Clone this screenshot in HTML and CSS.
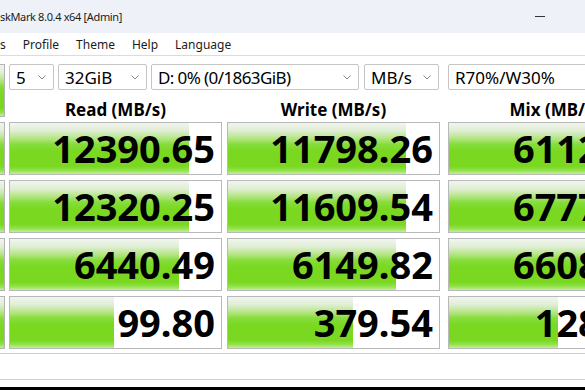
FILE: index.html
```html
<!DOCTYPE html>
<html lang="en-US">
<head>
    <meta charset="utf-8"/>
    <title>CrystalDiskMark 8.0.4 x64 [Admin]</title>
    <link rel="stylesheet" href="styles.css">
</head>
<body>
    <div class="window">
        <div class="titlebar">
            <span class="title">skMark 8.0.4 x64 [Admin]</span>
            <span class="minimize"></span>
        </div>
        <div class="menubar">
            <span class="menu-item">s</span>
            <span class="menu-item">Profile</span>
            <span class="menu-item">Theme</span>
            <span class="menu-item">Help</span>
            <span class="menu-item">Language</span>
        </div>

        <div class="content">
            <div class="top">
                <div class="all-button"></div>
                <div class="top-right">
                    <div class="combos">
                        <div class="combo combo-count">5
                            <svg class="chevron" width="8" height="5" viewBox="0 0 8 5"><polyline points="0.5,0.5 4,4 7.5,0.5"/></svg>
                        </div>
                        <div class="combo combo-size">32GiB
                            <svg class="chevron" width="8" height="5" viewBox="0 0 8 5"><polyline points="0.5,0.5 4,4 7.5,0.5"/></svg>
                        </div>
                        <div class="combo combo-drive">D: 0% (0/1863GiB)
                            <svg class="chevron" width="8" height="5" viewBox="0 0 8 5"><polyline points="0.5,0.5 4,4 7.5,0.5"/></svg>
                        </div>
                        <div class="combo combo-unit">MB/s
                            <svg class="chevron" width="8" height="5" viewBox="0 0 8 5"><polyline points="0.5,0.5 4,4 7.5,0.5"/></svg>
                        </div>
                        <div class="combo combo-mix">R70%/W30%
                            <svg class="chevron" width="8" height="5" viewBox="0 0 8 5"><polyline points="0.5,0.5 4,4 7.5,0.5"/></svg>
                        </div>
                    </div>
                    <div class="headers">
                        <div class="header col-read">Read (MB/s)</div>
                        <div class="header col-write">Write (MB/s)</div>
                        <div class="header col-mix">Mix (MB/s)</div>
                    </div>
                </div>
            </div>

            <div class="results">
                <div class="row">
                    <div class="test-button"></div>
                    <div class="cell col-read" style="background-size: 179px 100%;">12390.65</div>
                    <div class="cell col-write" style="background-size: 178px 100%;">11798.26</div>
                    <div class="cell col-mix" style="background-size: 168px 100%;">6112.48</div>
                </div>
                <div class="row">
                    <div class="test-button"></div>
                    <div class="cell col-read" style="background-size: 179px 100%;">12320.25</div>
                    <div class="cell col-write" style="background-size: 178px 100%;">11609.54</div>
                    <div class="cell col-mix" style="background-size: 170px 100%;">6777.31</div>
                </div>
                <div class="row">
                    <div class="test-button"></div>
                    <div class="cell col-read" style="background-size: 169px 100%;">6440.49</div>
                    <div class="cell col-write" style="background-size: 168px 100%;">6149.82</div>
                    <div class="cell col-mix" style="background-size: 169px 100%;">6608.17</div>
                </div>
                <div class="row">
                    <div class="test-button"></div>
                    <div class="cell col-read" style="background-size: 104px 100%;">99.80</div>
                    <div class="cell col-write" style="background-size: 125px 100%;">379.54</div>
                    <div class="cell col-mix" style="background-size: 109px 100%;">128.63</div>
                </div>
            </div>

            <div class="status"></div>
        </div>
    </div>
</body>
</html>
```

FILE: styles.css
```css
body {
    margin: 0;
    width: 585px;
    height: 390px;
    overflow: hidden;
    background: #000;
    font-family: "Noto Sans", "Liberation Sans", sans-serif;
    color: #000;
}

.window {
    height: 387px;
    background: #fff;
    overflow: hidden;
}

/* title bar and menu */

.titlebar {
    height: 33px;
    background-color: #eef2f8;
    display: flex;
    align-items: center;
    justify-content: space-between;
    font-size: 11px;
    letter-spacing: -0.35px;
    color: #1b1b1b;
    white-space: nowrap;
}

.minimize {
    width: 10px;
    height: 1px;
    background-color: #333;
    margin-right: 40px;
}

.menubar {
    height: 22px;
    border-bottom: 1px solid #dcdcdc;
    display: flex;
    align-items: center;
    gap: 17px;
    font-size: 12px;
    color: #1b1b1b;
    white-space: nowrap;
}

/* controls */

.content {
    width: 680px;
    padding-top: 8px;
    white-space: nowrap;
}

.top {
    display: flex;
    align-items: flex-start;
}

.all-button,
.test-button {
    flex-shrink: 0;
    width: 4px;
    border: 1px solid #b4b4b4;
    border-left: none;
    background-image: linear-gradient(to bottom, #f2f5f0 0%, #e0eed5 15%, #b5e585 30%, #86dd3a 42%, #7ad821 55%, #7ad821 85%, #92e24c 93%, #c2ef96 100%);
}

.all-button {
    height: 51px;
}

.top-right {
    flex-shrink: 0;
    margin-left: 4px;
}

.combos {
    display: flex;
}

.combo {
    box-sizing: border-box;
    flex-shrink: 0;
    height: 26px;
    border: 1px solid #c5c5c5;
    border-radius: 2px;
    background-color: #fff;
    display: flex;
    align-items: center;
    justify-content: space-between;
    padding: 0 7px 0 6px;
    font-size: 17px;
    overflow: hidden;
}

.chevron {
    flex-shrink: 0;
    fill: none;
    stroke: #888;
    stroke-width: 1;
}

.combo-count {
    width: 45px;
}

.combo-size {
    width: 89px;
    margin-left: 4px;
}

.combo-drive {
    width: 208px;
    margin-left: 4px;
    letter-spacing: -0.6px;
}

.combo-unit {
    width: 75px;
    margin-left: 5px;
}

.combo-mix {
    width: 213px;
    margin-left: 9px;
}

.headers {
    display: flex;
    padding-top: 8px;
}

.header {
    flex-shrink: 0;
    width: 213px;
    text-align: center;
    font-size: 17px;
    font-weight: bold;
    line-height: 24px;
}

/* result meters */

.results {
    display: flex;
    flex-direction: column;
    gap: 5px;
}

.row {
    display: flex;
    height: 53px;
}

.cell {
    box-sizing: border-box;
    flex-shrink: 0;
    width: 213px;
    border: 1px solid #b9b9b9;
    background-color: #fff;
    background-image: linear-gradient(to bottom, #f2f5f0 0%, #e0eed5 15%, #b5e585 30%, #86dd3a 42%, #7ad821 55%, #7ad821 85%, #92e24c 93%, #c2ef96 100%);
    background-repeat: no-repeat;
    text-align: right;
    padding-right: 6px;
    font-size: 38px;
    font-weight: bold;
    line-height: 51px;
}

.col-read {
    margin-left: 4px;
}

.headers .col-read {
    margin-left: 0;
}

.col-write {
    margin-left: 5px;
}

.col-mix {
    margin-left: 8px;
}

.status {
    margin-top: 4px;
    height: 25px;
    border-top: 1px solid #cfcfcf;
    border-bottom: 1px solid #cfcfcf;
}
```
